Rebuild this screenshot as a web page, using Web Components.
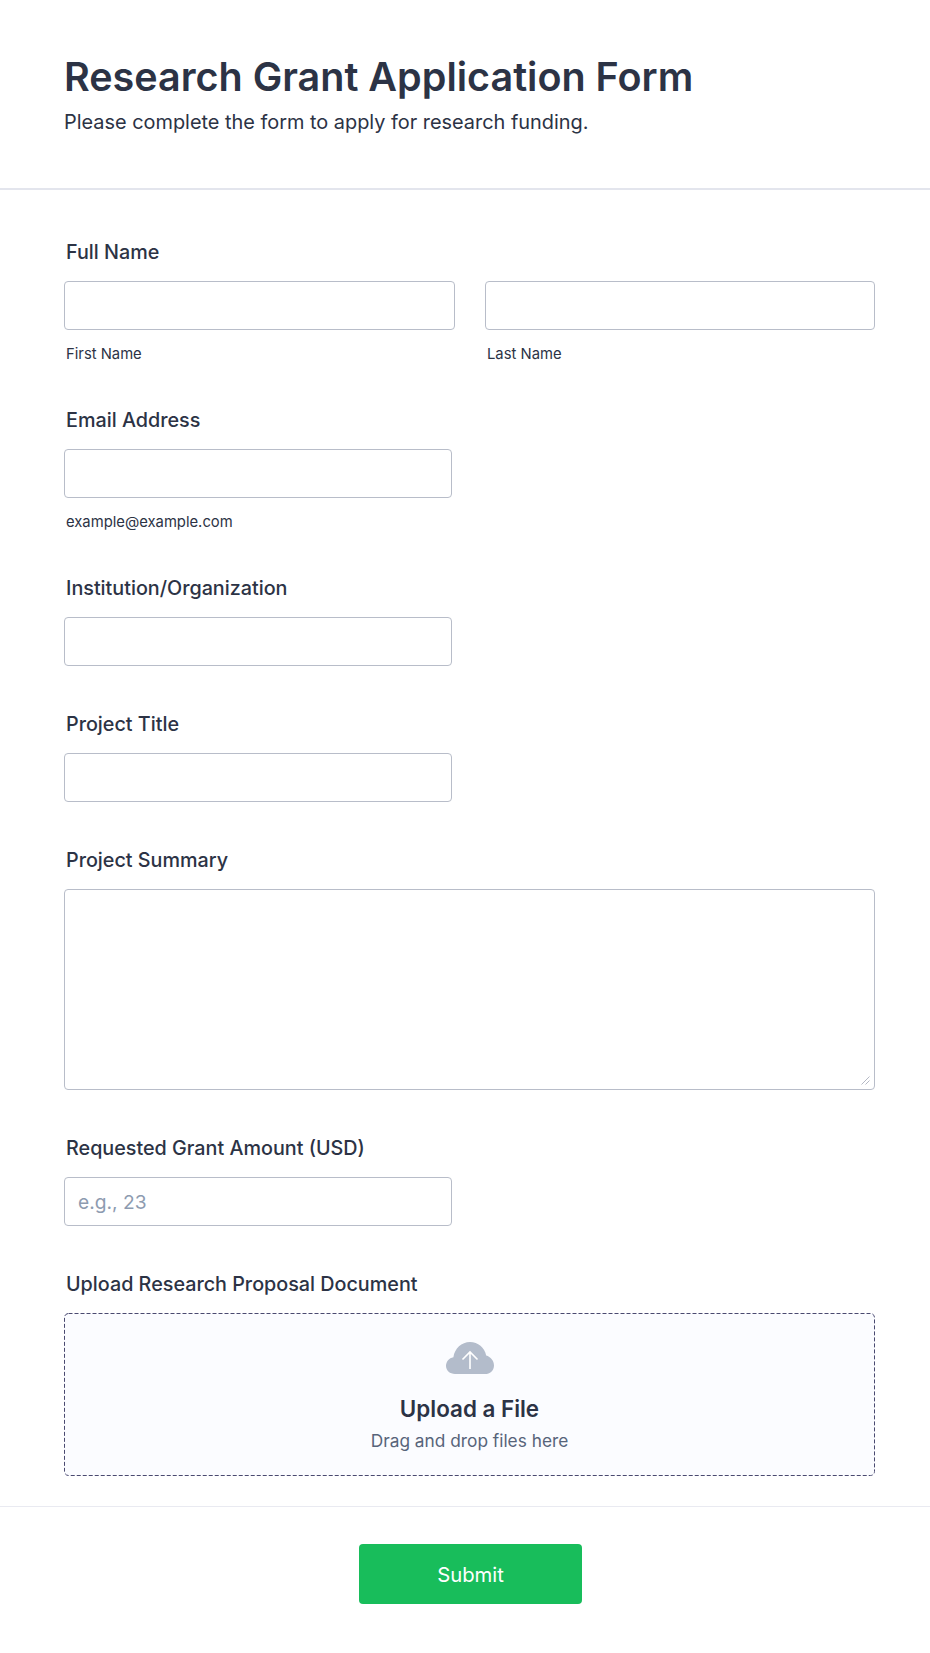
<!DOCTYPE html>
<html lang="en">
<head>
<meta charset="utf-8">
<title>Research Grant Application Form</title>
<style>
	html, body { margin: 0; padding: 0; background: #fff; }
	body { font-family: Inter, "Liberation Sans", sans-serif; color: #2c3345; }
</style>
</head>
<body>
<grant-form></grant-form>

<script>
class FormHeader extends HTMLElement {
	connectedCallback() {
		this.attachShadow({ mode: "open" }).innerHTML = `
			<style>
				:host { display: block; padding: 50px 64px 52px; border-bottom: 2px solid #e3e5ed; }
				h1 { margin: 0; font-size: 39.5px; line-height: 54px; font-weight: 600; color: #2c3345; }
				p { margin: 5px 0 0; font-size: 19.9px; line-height: 27px; color: #2c3345; }
			</style>
			<h1><slot name="title"></slot></h1>
			<p><slot name="subtitle"></slot></p>`;
	}
}

class FormField extends HTMLElement {
	connectedCallback() {
		this.attachShadow({ mode: "open" }).innerHTML = `
			<style>
				:host { display: block; margin-bottom: 43px; }
				label { display: block; margin: 0 0 15px 2px; padding-top: 1px; font-size: 19.76px; line-height: 28px; font-weight: 500; color: #2c3345; }
			</style>
			<label>${this.getAttribute("label")}</label>
			<slot></slot>`;
	}
}

class TextBox extends HTMLElement {
	connectedCallback() {
		const placeholder = this.getAttribute("placeholder") || "";
		const hint = this.getAttribute("hint");
		this.attachShadow({ mode: "open" }).innerHTML = `
			<style>
				:host { display: block; width: var(--box-width, 388px); }
				input {
					display: block;
					width: 100%;
					height: 49px;
					box-sizing: border-box;
					padding: 0 13px;
					background: #fff;
					border: 1px solid #b8bdc9;
					border-radius: 4px;
					font: 19.2px Inter, "Liberation Sans", sans-serif;
					color: #2c3345;
					outline: none;
				}
				input::placeholder { color: #8d9bb0; opacity: 1; }
				.hint { margin: 14px 0 -2px 2px; font-size: 14.8px; line-height: 20px; color: #2c3345; }
			</style>
			<input type="text" placeholder="${placeholder}" aria-label="${hint || placeholder || "text"}">
			${hint ? `<div class="hint">${hint}</div>` : ""}`;
	}
}

class TextArea extends HTMLElement {
	connectedCallback() {
		this.attachShadow({ mode: "open" }).innerHTML = `
			<style>
				:host { display: block; position: relative; }
				textarea {
					display: block;
					width: 100%;
					height: 201px;
					box-sizing: border-box;
					background: #fff;
					border: 1px solid #b8bdc9;
					border-radius: 4px;
					outline: none;
					resize: none;
				}
				svg { position: absolute; right: 5px; bottom: 5px; width: 9px; height: 9px; }
			</style>
			<textarea aria-label="Project Summary"></textarea>
			<svg viewBox="0 0 9 9" aria-hidden="true">
				<path fill="none" stroke="#b4b8c4" d="M0.5 8.5L8.5 0.5M4.5 8.5L8.5 4.5"/>
			</svg>`;
	}
}

class UploadBox extends HTMLElement {
	connectedCallback() {
		this.attachShadow({ mode: "open" }).innerHTML = `
			<style>
				:host {
					display: flex;
					flex-direction: column;
					align-items: center;
					position: relative;
					height: 163px;
					box-sizing: border-box;
					padding-top: 29px;
					background: #fbfcff;
					border-radius: 4px;
				}
				.edge { position: absolute; inset: 0; width: 100%; height: 100%; }
				.edge rect {
					x: 0.5px;
					y: 0.5px;
					width: calc(100% - 1px);
					height: calc(100% - 1px);
					rx: 4px;
					fill: none;
					stroke: #4a4a70;
					stroke-dasharray: 4 2;
				}
				.cloud { display: block; width: 48px; height: 32px; }
				.title { margin-top: 21px; font-size: 22.4px; line-height: 28px; font-weight: 600; color: #2c3345; }
				.sub { margin-top: 6px; font-size: 17.3px; line-height: 24px; color: #57647a; }
			</style>
			<svg class="edge" aria-hidden="true"><rect></rect></svg>
			<svg class="cloud" viewBox="0 0 48 32" aria-hidden="true">
				<path fill="#b3bccb" d="M9 32C4 32 0 28.4 0 24c0-4.4 3-8 7.4-8.8C8.6 6.6 15.6 0 24 0c8 0 14.6 5.6 16.2 13.4C44.6 14.6 48 18.6 48 23.4 48 28.4 44 32 39 32z"/>
				<path fill="none" stroke="#fff" stroke-width="1.6" d="M24 27V10M16.5 17.5L24 10l7.5 7.5"/>
			</svg>
			<div class="title">Upload a File</div>
			<div class="sub">Drag and drop files here</div>`;
	}
}

class SubmitBar extends HTMLElement {
	connectedCallback() {
		this.attachShadow({ mode: "open" }).innerHTML = `
			<style>
				:host { display: flex; justify-content: center; padding: 37px 0 49px 11px; border-top: 1px solid #e9eaf1; }
				button {
					width: 223px;
					height: 60px;
					background: #18bd5b;
					border: 0;
					border-radius: 4px;
					font: 400 20.3px Inter, "Liberation Sans", sans-serif;
					color: #fff;
				}
			</style>
			<button type="button"><slot></slot></button>`;
	}
}

class GrantForm extends HTMLElement {
	connectedCallback() {
		this.attachShadow({ mode: "open" }).innerHTML = `
			<style>
				:host { display: block; }
				.fields { padding: 47px 55px 30px 64px; }
				.pair { display: grid; grid-template-columns: 391px 390px; gap: 30px; --box-width: 100%; }
				.last { margin-bottom: 0; }
			</style>
			<form-header>
				<span slot="title">Research Grant Application Form</span>
				<span slot="subtitle">Please complete the form to apply for research funding.</span>
			</form-header>
			<div class="fields">
				<form-field label="Full Name">
					<div class="pair">
						<text-box hint="First Name"></text-box>
						<text-box hint="Last Name"></text-box>
					</div>
				</form-field>
				<form-field label="Email Address">
					<text-box hint="example@example.com"></text-box>
				</form-field>
				<form-field label="Institution/Organization">
					<text-box></text-box>
				</form-field>
				<form-field label="Project Title">
					<text-box></text-box>
				</form-field>
				<form-field label="Project Summary">
					<text-area></text-area>
				</form-field>
				<form-field label="Requested Grant Amount (USD)">
					<text-box placeholder="e.g., 23"></text-box>
				</form-field>
				<form-field class="last" label="Upload Research Proposal Document">
					<upload-box></upload-box>
				</form-field>
			</div>
			<submit-bar>Submit</submit-bar>`;
	}
}

customElements.define("form-header", FormHeader);
customElements.define("form-field", FormField);
customElements.define("text-box", TextBox);
customElements.define("text-area", TextArea);
customElements.define("upload-box", UploadBox);
customElements.define("submit-bar", SubmitBar);
customElements.define("grant-form", GrantForm);
</script>
</body>
</html>
